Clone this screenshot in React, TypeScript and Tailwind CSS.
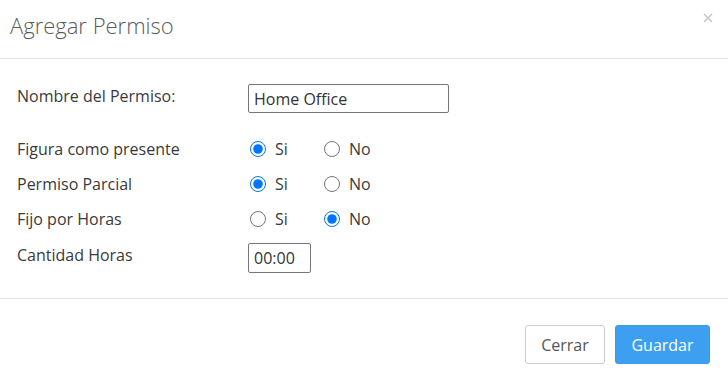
import React from "react";

const RadioRow = ({
  label,
  name,
  value,
}: {
  label: string;
  name: string;
  value: "si" | "no";
}) => {
  return (
    <div className="flex h-[35px] items-center">
      <div className="w-[231px] shrink-0 leading-6">{label}</div>
      <label className="flex w-[75px] items-center">
        <input
          type="radio"
          name={name}
          defaultChecked={value === "si"}
          className="m-0 ml-[2px] h-4 w-4 accent-[#0075ff]"
        />
        <span className="ml-[9px]">Si</span>
      </label>
      <label className="flex items-center">
        <input
          type="radio"
          name={name}
          defaultChecked={value === "no"}
          className="m-0 ml-[1px] h-4 w-4 accent-[#0075ff]"
        />
        <span className="ml-[9px]">No</span>
      </label>
    </div>
  );
};

export default function App() {
  return (
    <div
      className="h-[378px] w-[728px] bg-white text-[16px] text-[#3a3a3a]"
      style={{ fontFamily: '"Open Sans", sans-serif' }}
    >
      {/* Header */}
      <div className="relative flex h-[59px] items-center border-b border-[#e5e5e5] px-[10px]">
        <h2 className="-mt-[7px] text-[22px] font-light text-[#5a5a5a]">Agregar Permiso</h2>
        <button className="absolute right-[15px] top-[13px] text-[#c4c4c4]">
          <svg width="10" height="10" viewBox="0 0 10 10">
            <path d="M1 1 L9 9 M9 1 L1 9" stroke="currentColor" strokeWidth="1.4" />
          </svg>
        </button>
      </div>

      {/* Body */}
      <div className="border-b border-[#e5e5e5] px-[17px] pb-[25px] pt-[25px]">
        <div className="flex items-start">
          <div className="w-[231px] shrink-0 leading-6">Nombre del Permiso:</div>
          <input
            type="text"
            defaultValue="Home Office"
            className="h-[29px] w-[201px] rounded-[2px] border border-[#767676] px-[5px] text-[16px] text-[#333] outline-none"
          />
        </div>

        <div className="mt-[18px]">
          <RadioRow label="Figura como presente" name="presente" value="si" />
          <RadioRow label="Permiso Parcial" name="parcial" value="si" />
          <RadioRow label="Fijo por Horas" name="horas" value="no" />
        </div>

        <div className="mt-[7px] flex items-start">
          <div className="w-[231px] shrink-0 leading-6">Cantidad Horas</div>
          <input
            type="text"
            defaultValue="00:00"
            className="h-[30px] w-[63px] rounded-[2px] border border-[#767676] px-[5px] text-[16px] text-[#333] outline-none"
          />
        </div>
      </div>

      {/* Footer */}
      <div className="flex justify-end gap-[10px] px-[18px] pt-[26px]">
        <button className="h-[39px] w-[80px] rounded-[3px] border border-[#ccc] bg-white text-[16px] text-[#555]">
          Cerrar
        </button>
        <button className="h-[39px] w-[95px] rounded-[3px] border border-[#3a99ea] bg-[#3d9ff0] text-[16px] text-white">
          Guardar
        </button>
      </div>
    </div>
  );
}
